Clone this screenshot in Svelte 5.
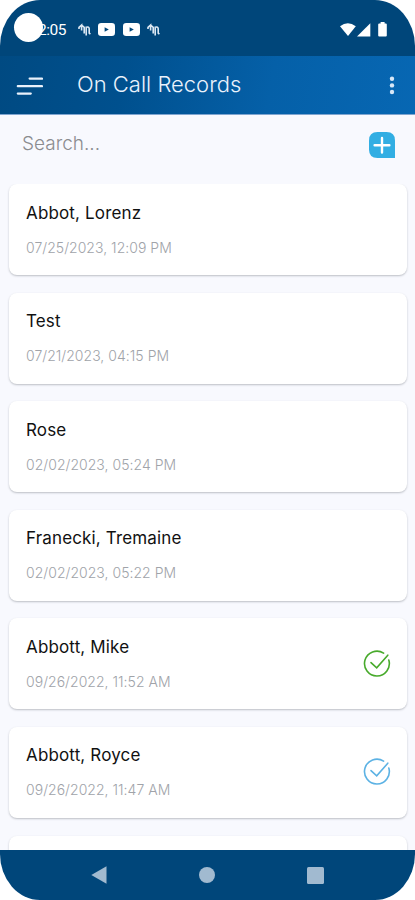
<script>
	let search = $state('');

	const records = [
		{ name: 'Abbot, Lorenz', date: '07/25/2023, 12:09 PM' },
		{ name: 'Test', date: '07/21/2023, 04:15 PM' },
		{ name: 'Rose', date: '02/02/2023, 05:24 PM' },
		{ name: 'Franecki, Tremaine', date: '02/02/2023, 05:22 PM' },
		{ name: 'Abbott, Mike', date: '09/26/2022, 11:52 AM', status: 'done' },
		{ name: 'Abbott, Royce', date: '09/26/2022, 11:47 AM', status: 'sent' }
	];

	let visible = $derived(records.filter((r) => r.name.toLowerCase().includes(search.toLowerCase())));
</script>

{#snippet signal()}
	<svg class="notice" width="13" height="14" viewBox="0 0 13 14" aria-hidden="true">
		<path d="M1 6V4.4L3.6 2v5.4M3.6 2l2.6 2.4v6.2M8.2 12.6V4.2q3-.8 3 1.6v4.4l1.2 1" />
	</svg>
{/snippet}

{#snippet video()}
	<svg width="17" height="13" viewBox="0 0 17 13" aria-hidden="true">
		<rect width="17" height="13" rx="3.2" fill="#fff" />
		<path d="M6.6 4.2v4.6l4.2-2.3z" fill="#00467a" />
	</svg>
{/snippet}

<div class="phone">
	<div class="statusbar">
		<span class="camera"></span>
		<span class="clock">2:05</span>
		<div class="notices">
			{@render signal()}
			{@render video()}
			{@render video()}
			{@render signal()}
		</div>
		<svg class="system" width="48" height="16" viewBox="0 0 48 16" fill="#fff" aria-hidden="true">
			<path d="M0 4.2Q7.8-1.8 15.8 4.2L8 14z" />
			<path d="M30.3 1.2v13.2H17z" />
			<path d="M40.6 0h4v1.6h1.2q1 0 1 1v10.8q0 1-1 1h-6.6q-1 0-1-1V2.6q0-1 1-1h1.4z" />
		</svg>
	</div>

	<header class="toolbar">
		<button class="icon-btn menu" aria-label="Menu">
			<svg width="27" height="20" viewBox="0 0 27 20">
				<path d="M13.6 2.6H26M1.8 10.2H26M1.8 17.6h13" stroke="#e9f1fb" stroke-width="2.2" stroke-linecap="round" />
			</svg>
		</button>
		<h1>On Call Records</h1>
		<button class="icon-btn more" aria-label="More options">
			<svg width="6" height="20" viewBox="0 0 6 20" fill="#d7e7f7">
				<circle cx="3" cy="3.8" r="2.2" />
				<circle cx="3" cy="10.4" r="2.2" />
				<circle cx="3" cy="17" r="2.2" />
			</svg>
		</button>
	</header>

	<div class="search-row">
		<input type="text" placeholder="Search..." bind:value={search} />
		<button class="icon-btn" aria-label="Add record">
			<svg width="26" height="26" viewBox="0 0 26 26">
				<path d="M8.5 0H17.5Q26 0 26 8.5V26H8.5Q0 26 0 17.5V8.5Q0 0 8.5 0z" fill="#32aee3" />
				<path d="M13 6v14.5M5.6 13.2h14.8" stroke="#fff" stroke-width="2.4" stroke-linecap="round" />
			</svg>
		</button>
	</div>

	<main>
		{#each visible as record}
			<article class="card">
				<div>
					<h2>{record.name}</h2>
					<p>{record.date}</p>
				</div>
				{#if record.status}
					<svg class="check check--{record.status}" width="28" height="28" viewBox="0 0 28 28" aria-hidden="true">
						<path d="M20.6 3.1A12.4 12.4 0 1 0 25.8 10" />
						<path d="M8 12.6l5.7 5.2L24.8 5.2" />
					</svg>
				{/if}
			</article>
		{/each}
		<article class="card"></article>
	</main>

	<nav>
		<svg width="16" height="18" viewBox="0 0 16 18"><path d="M15.5 0.3v17.4L0.3 9z" /></svg>
		<svg width="16" height="16" viewBox="0 0 16 16"><circle cx="8" cy="8" r="8" /></svg>
		<svg width="17" height="17" viewBox="0 0 17 17"><rect width="17" height="17" rx="1.5" /></svg>
	</nav>
</div>

<style>
	:global(body) { background: #fff; }

	.phone {
		display: flex;
		flex-direction: column;
		width: 415px;
		height: 900px;
		overflow: hidden;
		border-radius: 40px / 46px;
		background: #f8f9fe;
		font-family: Inter, "Open Sans", sans-serif;
	}

	.statusbar { display: flex; flex: none; align-items: center; height: 56px; padding: 3px 27px 0 14px; box-sizing: border-box; background: #00467a; color: #fff; }
	.camera { z-index: 1; flex: none; width: 29px; height: 29px; margin-top: -5px; border-radius: 50%; background: #fff; }
	.clock { margin-left: -5px; font-family: Roboto, sans-serif; font-size: 15.5px; font-weight: 400; letter-spacing: -0.5px; }
	.notices { display: flex; align-items: center; gap: 7.5px; margin-left: 12px; }
	.notice { fill: none; stroke: #dce8f3; stroke-width: 1.6; }
	.system { margin-left: auto; }

	.toolbar { display: flex; flex: none; align-items: center; height: 59px; padding: 0 20px 0 16px; box-sizing: border-box; border-bottom: 1px solid #7fa5d0; background: linear-gradient(100deg, #004a82 0%, #00508e 30%, #0560a8 65%, #0767b3 100%); }
	.icon-btn { display: flex; padding: 0; border: 0; background: none; cursor: pointer; }
	.menu { margin-top: 2px; }
	h1 { margin: -3px 0 0 34px; color: #eaf2fc; font-size: 22px; font-weight: 300; }
	.more { margin-left: auto; }

	.search-row { display: flex; flex: none; align-items: center; justify-content: space-between; height: 69px; padding: 0 20px 9px 22px; box-sizing: border-box; }
	input { width: 250px; padding: 0 0 3px; border: 0; outline: 0; background: none; color: #333; font-family: inherit; font-size: 19px; font-weight: 300; }
	input::placeholder { color: #8b8c90; opacity: 1; }

	main { display: flex; flex: 1; flex-direction: column; gap: 17.6px; min-height: 0; padding: 0 8px 0 9px; overflow: hidden; }
	.card { display: flex; flex: none; align-items: center; justify-content: space-between; height: 91px; padding: 0 16px 0 17px; box-sizing: border-box; border-radius: 8px; background: #fff; box-shadow: 0 1px 2px rgba(50, 55, 65, 0.3); }
	h2 { margin: -1px 0 0; color: #111; font-size: 17px; font-weight: 400; line-height: 24px; letter-spacing: 0.15px; }
	p { margin: 13px 0 0; color: #a0a3a9; font-size: 14px; font-weight: 300; line-height: 20px; letter-spacing: 0.03px; }

	.check { fill: none; stroke-width: 1.6; stroke-linecap: round; }
	.check--done { stroke: #48aa2c; }
	.check--sent { stroke: #5cb2e4; }

	nav { display: flex; flex: none; align-items: center; justify-content: space-between; height: 50px; padding: 0 91px; box-sizing: border-box; background: #00467a; fill: #a1bad0; }
</style>
